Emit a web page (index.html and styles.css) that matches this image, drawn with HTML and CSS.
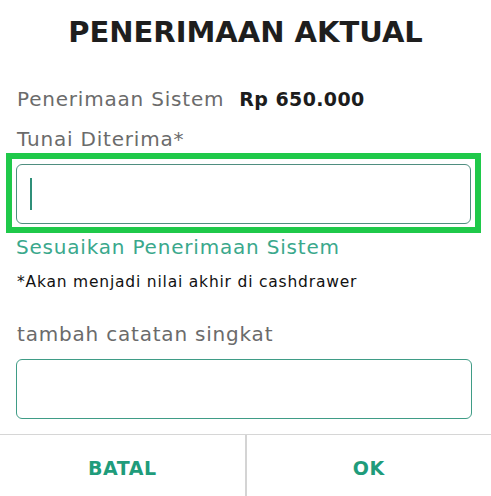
FILE: index.html
```html
<!DOCTYPE html>
<html lang="id">
<head>
    <meta charset="UTF-8">
    <meta name="viewport" content="width=device-width, initial-scale=1.0">
    <title>Penerimaan Aktual</title>
    <link rel="stylesheet" href="styles.css">
</head>
<body>
    <div class="dialog">
        <h1 class="title">PENERIMAAN AKTUAL</h1>
        <div class="content">
            <div class="system-row">
                <span class="label">Penerimaan Sistem</span>
                <span class="amount">Rp 650.000</span>
            </div>
            <div class="label cash-label">Tunai Diterima*</div>
            <div class="focus-ring">
                <div class="field">
                    <span class="caret"></span>
                </div>
            </div>
            <div class="adjust-link">Sesuaikan Penerimaan Sistem</div>
            <div class="note">*Akan menjadi nilai akhir di cashdrawer</div>
            <div class="label notes-label">tambah catatan singkat</div>
            <div class="field notes-field"></div>
        </div>
        <div class="actions">
            <button class="action-btn">BATAL</button>
            <button class="action-btn">OK</button>
        </div>
    </div>
</body>
</html>
```

FILE: styles.css
```css
body {
    margin: 0;
    background-color: #fff;
    font-family: "DejaVu Sans", sans-serif;
}

.dialog {
    width: 491px;
    height: 496px;
    overflow: hidden;
}

.title {
    margin: 0;
    padding-top: 12px;
    font-size: 29px;
    line-height: 40px;
    font-weight: bold;
    text-align: center;
    color: #1e1e1e;
}

.content {
    padding: 0 19px 0 16px;
}

.label {
    font-size: 20px;
    line-height: 24px;
    letter-spacing: 0.8px;
    color: #6b6b6b;
}

.system-row {
    margin-top: 35px;
    display: flex;
    gap: 15px;
    padding-left: 1px;
}

.amount {
    font-size: 19px;
    line-height: 24px;
    letter-spacing: 0.4px;
    font-weight: bold;
    color: #1c1c1c;
}

.cash-label {
    margin-top: 16px;
    padding-left: 1px;
}

.focus-ring {
    margin: 2px -9px 0 -10px;
    border: 6px solid #1fc94a;
    padding: 5px 4px 3px 4px;
}

.field {
    height: 58px;
    border: 1px solid #4f8e80;
    border-radius: 6px;
    display: flex;
    align-items: center;
    padding-left: 13px;
}

.caret {
    width: 2px;
    height: 32px;
    background-color: #2f8f79;
}

.adjust-link {
    margin-top: 2px;
    font-size: 20px;
    line-height: 24px;
    letter-spacing: 0.8px;
    color: #3aa88c;
}

.note {
    margin-top: 13px;
    font-size: 15.5px;
    line-height: 20px;
    letter-spacing: 0.8px;
    color: #111;
    padding-left: 1px;
}

.notes-label {
    margin-top: 30px;
    padding-left: 1px;
}

.notes-field {
    margin-top: 13px;
    border-color: #3f9c86;
}

.actions {
    margin-top: 15px;
    display: flex;
    border-top: 1px solid #d6d6d6;
}

.action-btn {
    flex: 1;
    height: 61px;
    padding: 4px 0 0;
    border: none;
    background: none;
    font-family: "DejaVu Sans", sans-serif;
    font-size: 19px;
    letter-spacing: 0.5px;
    font-weight: bold;
    color: #1f9c7b;
    cursor: pointer;
}

.action-btn + .action-btn {
    border-left: 2px solid #d4d4d4;
}
```
